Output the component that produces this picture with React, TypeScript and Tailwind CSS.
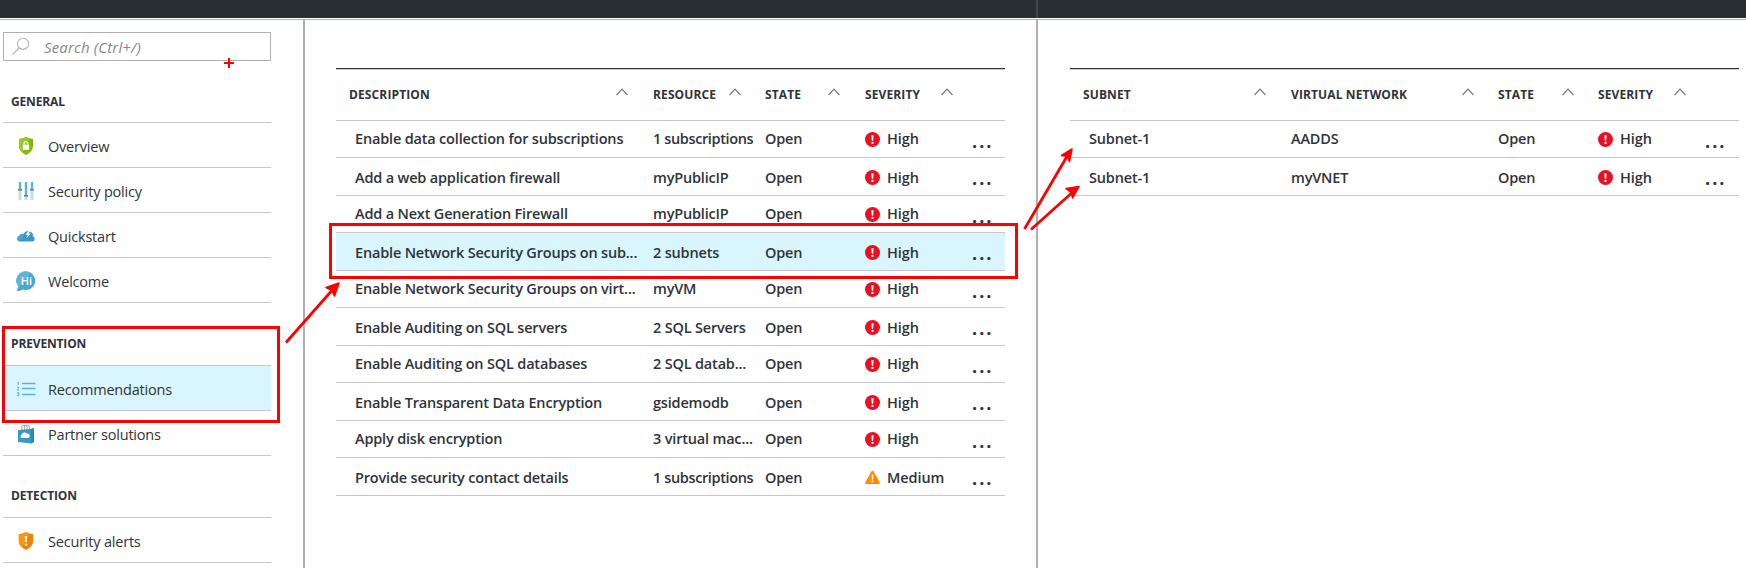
import React from "react";

type Level = "High" | "Medium";

function SortCaret() {
  return (
    <svg width="12" height="8" viewBox="0 0 12 8" className="mb-[6px] shrink-0" fill="none" stroke="#75787c" strokeWidth="1.2">
      <path d="M0.5 7 L6 1.2 L11.5 7" />
    </svg>
  );
}

function SeverityIcon({ level }: { level: Level }) {
  if (level === "Medium") {
    return (
      <svg width="15" height="15" viewBox="0 0 15 15" className="shrink-0">
        <path d="M6.3 1.4 Q7.5 0 8.7 1.4 L14.8 12.4 Q15.3 14 13.8 14 H1.2 Q-0.3 14 0.2 12.4 Z" fill="#ff8c00" />
        <path d="M6.6 4.6 H8.4 L8.1 9.4 H6.9 Z" fill="#fff" />
        <circle cx="7.5" cy="11.4" r="1" fill="#fff" />
      </svg>
    );
  }
  return (
    <svg width="15" height="15" viewBox="0 0 15 15" className="shrink-0">
      <circle cx="7.5" cy="7.5" r="7.5" fill="#e81123" />
      <path d="M6.4 3.3 H8.6 L8.2 8.8 H6.8 Z" fill="#fff" />
      <circle cx="7.5" cy="10.9" r="1.15" fill="#fff" />
    </svg>
  );
}

function HeaderCell({ label, caret }: { label: string; caret: string }) {
  return (
    <div className="flex items-center justify-between">
      <span>{label}</span>
      <span className={caret}>
        <SortCaret />
      </span>
    </div>
  );
}

const headerRow =
  "grid h-[53px] items-center border-t border-b border-t-[#2b2f37] border-b-[#c6c6c6] pt-[3px] pb-[2px] text-[12px] leading-[20px] font-bold tracking-[0.12px] shadow-[inset_0_1px_0_#cfd0d2]";
const bodyRow =
  "grid items-center border-b border-[#c6c6c6] text-[14.5px] leading-[20px] font-semibold tracking-[-0.18px] whitespace-nowrap";

function rowSize(i: number) {
  return i % 2 === 0 ? "h-[37px]" : "h-[38px] pt-[2px]";
}

function SeverityCells({ level, dots }: { level: Level; dots: string }) {
  return (
    <>
      <span>Open</span>
      <span className="flex items-center gap-[7px]">
        <SeverityIcon level={level} />
        <span className="tracking-[-0.1px]">{level}</span>
      </span>
      <span className={`text-[18px] leading-[20px] font-bold tracking-[2px] ${dots}`}>...</span>
    </>
  );
}

function dotsOffset(i: number) {
  return i % 2 === 0 ? "mt-[4px]" : "mt-px";
}

const recommendations: { text: string; resource: string; level: Level; selected?: boolean }[] = [
  { text: "Enable data collection for subscriptions", resource: "1 subscriptions", level: "High" },
  { text: "Add a web application firewall", resource: "myPublicIP", level: "High" },
  { text: "Add a Next Generation Firewall", resource: "myPublicIP", level: "High" },
  { text: "Enable Network Security Groups on sub...", resource: "2 subnets", level: "High", selected: true },
  { text: "Enable Network Security Groups on virt...", resource: "myVM", level: "High" },
  { text: "Enable Auditing on SQL servers", resource: "2 SQL Servers", level: "High" },
  { text: "Enable Auditing on SQL databases", resource: "2 SQL datab...", level: "High" },
  { text: "Enable Transparent Data Encryption", resource: "gsidemodb", level: "High" },
  { text: "Apply disk encryption", resource: "3 virtual mac...", level: "High" },
  { text: "Provide security contact details", resource: "1 subscriptions", level: "Medium" },
];

const subnets = [
  { subnet: "Subnet-1", network: "AADDS" },
  { subnet: "Subnet-1", network: "myVNET" },
];

function RecommendationTable() {
  const cols = "grid-cols-[304px_112px_100px_107px_1fr]";
  return (
    <section className="ml-[31px] mt-[48px] w-[669px]">
      <div className={`${headerRow} ${cols} pl-[13px]`}>
        <HeaderCell label="DESCRIPTION" caret="mr-[25px]" />
        <HeaderCell label="RESOURCE" caret="mr-[24px]" />
        <HeaderCell label="STATE" caret="mr-[25px]" />
        <HeaderCell label="SEVERITY" caret="mr-[19px]" />
        <span />
      </div>
      {recommendations.map((r, i) => (
        <div key={i} className={`${bodyRow} ${cols} ${rowSize(i)} pl-[13px] ${r.selected ? "bg-[#d9f5fd]" : ""}`}>
          <span className="pl-[6px]">{r.text}</span>
          <span className={r.resource.endsWith("subscriptions") ? "tracking-[-0.38px]" : ""}>{r.resource}</span>
          <SeverityCells level={r.level} dots={dotsOffset(i)} />
        </div>
      ))}
    </section>
  );
}

function SubnetTable() {
  const cols = "grid-cols-[208px_207px_100px_107px_1fr]";
  return (
    <section className="ml-[32px] mt-[48px] w-[669px]">
      <div className={`${headerRow} ${cols} pl-[13px]`}>
        <HeaderCell label="SUBNET" caret="mr-[25px]" />
        <HeaderCell label="VIRTUAL NETWORK" caret="mr-[24px]" />
        <HeaderCell label="STATE" caret="mr-[24px]" />
        <HeaderCell label="SEVERITY" caret="mr-[19px]" />
        <span />
      </div>
      {subnets.map((s, i) => (
        <div key={i} className={`${bodyRow} ${cols} ${rowSize(i)} pl-[13px]`}>
          <span className="pl-[6px]">{s.subnet}</span>
          <span>{s.network}</span>
          <SeverityCells level="High" dots={dotsOffset(i)} />
        </div>
      ))}
    </section>
  );
}

function ShieldLock() {
  return (
    <svg width="20" height="20" viewBox="0 0 20 20">
      <path d="M10 1 Q13 2.6 17 3 V10 Q17 15.5 10 19 Q3 15.5 3 10 V3 Q7 2.6 10 1 Z" fill="#7fba00" />
      <path d="M10 1 Q7 2.6 3 3 V10 Q3 14 6.4 16.8 L13.5 2.4 Q11.5 1.8 10 1 Z" fill="#95ca2c" />
      <rect x="6.8" y="8.8" width="6.4" height="5" fill="#fff" />
      <path d="M8.1 9 V7.6 A1.9 1.9 0 0 1 11.9 7.6 V9" fill="none" stroke="#fff" strokeWidth="1.2" />
    </svg>
  );
}

function Sliders() {
  return (
    <svg width="20" height="20" viewBox="0 0 20 20">
      {[2.5, 8.5, 14.5].map((x) => (
        <rect key={x} x={x} y="1" width="3" height="18" fill="#bfe0ef" />
      ))}
      <rect x="3" y="1" width="2" height="7" fill="#59b4d9" />
      <rect x="9" y="1" width="2" height="13" fill="#59b4d9" />
      <rect x="15" y="1" width="2" height="7" fill="#59b4d9" />
      <rect x="2" y="8" width="4" height="1.6" fill="#7a7a7a" />
      <rect x="8" y="14" width="4" height="1.6" fill="#7a7a7a" />
      <rect x="14" y="8" width="4" height="1.6" fill="#7a7a7a" />
    </svg>
  );
}

function CloudBolt() {
  return (
    <svg width="20" height="20" viewBox="0 0 20 20">
      <path d="M3.6 15.6 A3 3 0 0 1 3.4 9.8 A3 3 0 0 1 7.6 8 A5 5 0 0 1 16.6 7.6 Q17.2 8.8 16.8 10.2 A2.9 2.9 0 0 1 17 15.6 Z" fill="#3999c6" />
      <path d="M3.4 9.8 A3 3 0 0 1 7.6 8 Q8.4 10.4 7 12.6 L3.6 15.6 A3 3 0 0 1 3.4 9.8" fill="#4aa5cf" />
      <path d="M12.8 4.4 L9.6 8.8 H11.8 L10.4 12.2 L14.8 7.6 H12.6 L14.4 4.4 Z" fill="#fff" />
    </svg>
  );
}

function HiBubble() {
  return (
    <svg width="20" height="20" viewBox="0 0 20 20">
      <path d="M10.2 0.5 A9.2 9.2 0 1 1 7 18.4 Q4.6 20 0.6 20 Q2.3 18 2.1 15 A9.2 9.2 0 0 1 10.2 0.5 Z" fill="#4aa5cf" />
      <path d="M10.2 0.5 A9.2 9.2 0 0 0 2.1 15 Q2.3 18 0.6 20 L14.5 1.6 Q12.6 0.5 10.2 0.5 Z" fill="#5fb5da" />
      <text x="4.8" y="14" fontFamily="Open Sans, sans-serif" fontSize="11" fontWeight="600" fill="#fff">
        Hi
      </text>
    </svg>
  );
}

function NumberedList() {
  return (
    <svg width="20" height="20" viewBox="0 0 20 20" fill="none">
      <path d="M6 4.5 H19.5 M6 9.5 H19.5 M6 15.5 H19.5" stroke="#59b4d9" strokeWidth="1.4" />
      <path
        d="M1.2 3.6 L2.2 3 V6 M1 8.2 H2.7 V9.4 L1.1 11 H3 M1 13.6 H2.8 V16.6 H1 M1.4 15 H2.8"
        stroke="#59b4d9"
        strokeWidth="1"
      />
    </svg>
  );
}

function StoreBag() {
  return (
    <svg width="20" height="20" viewBox="0 0 20 20">
      <path d="M5.8 6 V3 Q5.8 1.3 7.4 1.3 H9.6 Q11 1.3 11 3 V6 M8.4 6 V3 Q8.4 1.3 10 1.3 H11.8 Q13.4 1.3 13.4 3 V6" fill="none" stroke="#9a9a9a" strokeWidth="0.9" />
      <path d="M2 6 L15 5 L18 4 V18 L15.5 19.4 L2 18 Z" fill="#3999c6" />
      <path d="M15 5 L18 4 V18 L15.5 19.4 Z" fill="#2f85b0" />
      <path d="M5.6 14 A2 2 0 0 1 5.8 10.4 A2.8 2.8 0 0 1 10.6 9.6 A2.2 2.2 0 0 1 12.2 14 Z" fill="#fff" />
    </svg>
  );
}

function ShieldAlert() {
  return (
    <svg width="20" height="20" viewBox="0 0 20 20">
      <path d="M10 1 Q13 2.8 17.2 3.2 V10 Q17 15.5 10 19 Q3 15.5 2.8 10 V3.2 Q7 2.8 10 1 Z" fill="#f08300" />
      <path d="M10 1 Q7 2.8 2.8 3.2 V10 Q3 14 6.2 16.8 L13.6 2.6 Q11.4 1.9 10 1 Z" fill="#ff9414" />
      <path d="M8.8 5 H11.2 L10.8 11.2 H9.2 Z" fill="#fff" />
      <circle cx="10" cy="13.6" r="1.2" fill="#fff" />
    </svg>
  );
}

function MenuItem({ icon, label, selected }: { icon: React.ReactNode; label: string; selected?: boolean }) {
  return (
    <li className={`flex h-[45px] items-center border-b border-[#c6c6c6] pl-[13px] pt-px ${selected ? "bg-[#d9f5fd]" : ""}`}>
      {icon}
      <span className="ml-[12px] mt-[2px] text-[14.5px] leading-[20px] tracking-[-0.2px]">{label}</span>
    </li>
  );
}

function MenuGroup({ title, size, children }: { title: string; size: string; children: React.ReactNode }) {
  return (
    <div>
      <h2
        className={`flex items-end border-b border-[#c6c6c6] pl-[8px] text-[12px] leading-[16px] font-bold tracking-[-0.15px] ${size}`}
      >
        {title}
      </h2>
      <ul>{children}</ul>
    </div>
  );
}

function Sidebar() {
  return (
    <nav className="ml-[3px] w-[268px] shrink-0 pt-[12px]">
      <div className="flex h-[29px] items-center border border-[#b0b0b0]">
        <svg width="18" height="19" viewBox="0 0 18 19" className="ml-[8px]" fill="none" stroke="#b2b2b2" strokeWidth="1.1">
          <circle cx="11" cy="6.8" r="5.6" />
          <path d="M7 11 L0.6 17.6" />
        </svg>
        <span className="ml-[14px] text-[15px] leading-[20px] tracking-[0.15px] text-[#85888c] italic">Search (Ctrl+/)</span>
      </div>
      <MenuGroup title="GENERAL" size="h-[62px] pb-[12px]">
        <MenuItem icon={<ShieldLock />} label="Overview" />
        <MenuItem icon={<Sliders />} label="Security policy" />
        <MenuItem icon={<CloudBolt />} label="Quickstart" />
        <MenuItem icon={<HiBubble />} label="Welcome" />
      </MenuGroup>
      <MenuGroup title="PREVENTION" size="h-[63px] pb-[13px]">
        <MenuItem icon={<NumberedList />} label="Recommendations" selected />
        <MenuItem icon={<StoreBag />} label="Partner solutions" />
      </MenuGroup>
      <MenuGroup title="DETECTION" size="h-[62px] pb-[13px]">
        <MenuItem icon={<ShieldAlert />} label="Security alerts" />
      </MenuGroup>
    </nav>
  );
}

function Annotations() {
  return (
    <>
      <div className="absolute top-[326px] left-[2px] h-[97px] w-[278px] border-3 border-[#ff0000]" />
      <div className="absolute top-[223px] left-[329px] h-[56px] w-[689px] border-3 border-[#ff0000]" />
      <svg className="absolute top-0 left-0" width="1746" height="568" viewBox="0 0 1746 568" stroke="#ff0000" fill="#ff0000">
        <path d="M224 63 H234 M229 58 V68" strokeWidth="2" fill="none" />
        <path d="M286 342.5 L335 287 M1024.5 229 L1069 153 M1031 229.5 L1075 190" strokeWidth="2.8" fill="none" />
        <g strokeWidth="1.6" strokeLinejoin="round">
          <path d="M339 283 L326 287.5 L332 290.5 L334.5 296 Z" />
          <path d="M1072 149 L1061.5 155.5 L1067.5 156.5 L1069.5 161.5 Z" />
          <path d="M1079 186.5 L1066 188.5 L1071.5 192.5 L1072.5 198 Z" />
        </g>
      </svg>
    </>
  );
}

export default function App() {
  return (
    <div className="relative flex h-[568px] w-[1746px] flex-col overflow-hidden bg-white font-['Open_Sans','Noto_Sans',sans-serif] text-[#2f333b]">
      <header className="flex h-[18px] shrink-0 bg-[#282f33]">
        <div className="w-[1036px]" />
        <div className="w-[2px] bg-[#43494d]" />
      </header>
      <div className="mt-px h-px shrink-0 bg-[#b0b0b0]" />
      <main className="flex flex-1">
        <div className="w-[305px] shrink-0 border-r-2 border-[#b0b0b0]">
          <Sidebar />
        </div>
        <div className="w-[733px] shrink-0 border-r-2 border-[#b0b0b0]">
          <RecommendationTable />
        </div>
        <div className="flex-1">
          <SubnetTable />
        </div>
      </main>
      <Annotations />
    </div>
  );
}
